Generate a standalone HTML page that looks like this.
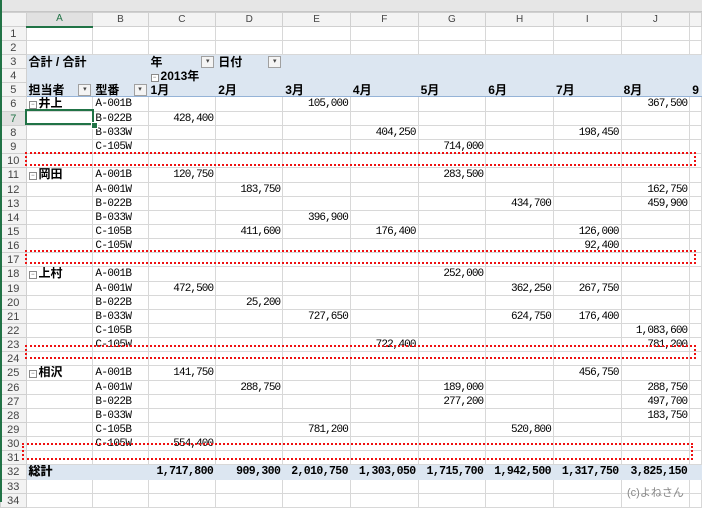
<!DOCTYPE html>
<html><head><meta charset="utf-8"><style>
body{margin:0;width:702px;height:502px;overflow:hidden;background:#fff;position:relative;font-family:"Liberation Mono","Noto Sans CJK JP",monospace;}
#top{position:absolute;left:0;top:0;width:702px;height:12px;background:#e6e6e6;border-bottom:1px solid #c6c6c6;box-sizing:border-box}
#gl{position:absolute;left:0;top:0;width:2px;height:502px;background:#217346;z-index:5}
table{position:absolute;left:0;top:12px;border-collapse:collapse;table-layout:fixed}
tr{height:14px}
td{height:14px;max-height:14px;padding:0 2px;border:1px solid #d8d8d8;font-size:11px;letter-spacing:-0.6px;white-space:nowrap;overflow:hidden;line-height:12px;box-sizing:border-box;position:relative;color:#000}
tr.h td{background:#f3f3f3;text-align:center;font-family:"Liberation Sans",sans-serif;font-size:10px;letter-spacing:0;color:#444;border-color:#d0d0d0}
td.rn{background:#f3f3f3;text-align:center;font-family:"Liberation Sans",sans-serif;font-size:11px;letter-spacing:0;color:#444;border-color:#d0d0d0}
td.n{text-align:right;letter-spacing:-0.9px}
tr.p td:not(.rn){background:#dce6f1;border-color:#dce6f1;font-weight:bold;font-family:"Liberation Sans","Noto Sans CJK JP",sans-serif;font-size:12px;letter-spacing:0}
tr.p5 td:not(.rn){border-bottom:1px solid #95b3d7}
tr.t td:not(.rn){background:#dce6f1;border-color:#dce6f1;font-weight:bold;font-size:11.5px;letter-spacing:-0.6px}
b.j{font-family:"Liberation Sans","Noto Sans CJK JP",sans-serif;font-size:12px;letter-spacing:0;line-height:12px}
.m{display:inline-block;width:6px;height:6px;border:1px solid #8a8a8a;font-size:6px;line-height:6px;text-align:center;color:#555;margin-right:2px;vertical-align:1px;font-weight:normal;background:#fff}
.dd{position:absolute;right:1px;top:1px;width:11px;height:10px;border:1px solid #a0a0a0;background:#f4f4f4;font-size:7px;line-height:10px;text-align:center;color:#444;font-weight:normal}
.red{position:absolute;left:25px;width:671px;height:14px;border:2px dotted #ee1111;box-sizing:border-box}
#sel{position:absolute;left:25px;top:109px;width:69px;height:16px;border:2px solid #217346;box-sizing:border-box}
#sq{position:absolute;left:91px;top:122px;width:5px;height:5px;background:#217346;border:1px solid #fff}
#wm{position:absolute;left:627px;top:484px;font-size:11px;color:#888;font-family:"Liberation Sans","Noto Sans CJK JP",sans-serif}
</style></head><body>
<div id="top"></div><div id="gl"></div>
<table>
<colgroup><col style="width:26px"><col style="width:67px"><col style="width:56px"><col style="width:68px"><col style="width:68px"><col style="width:68px"><col style="width:68px"><col style="width:68px"><col style="width:68px"><col style="width:68px"><col style="width:69px"><col style="width:8px"></colgroup>
<tr class="h"><td></td><td style="color:#217346;border-bottom:2px solid #217346;background:#e1e1e1">A</td><td>B</td><td>C</td><td>D</td><td>E</td><td>F</td><td>G</td><td>H</td><td>I</td><td>J</td><td></td></tr>
<tr><td class="rn">1</td><td></td><td></td><td></td><td></td><td></td><td></td><td></td><td></td><td></td><td></td><td></td></tr>
<tr><td class="rn">2</td><td></td><td></td><td></td><td></td><td></td><td></td><td></td><td></td><td></td><td></td><td></td></tr>
<tr class="p"><td class="rn">3</td><td>合計 / 合計</td><td></td><td>年<span class="dd">▾</span></td><td>日付<span class="dd">▾</span></td><td></td><td></td><td></td><td></td><td></td><td></td><td></td></tr>
<tr class="p"><td class="rn">4</td><td></td><td></td><td><span class="m">−</span>2013年</td><td></td><td></td><td></td><td></td><td></td><td></td><td></td><td></td></tr>
<tr class="p p5"><td class="rn">5</td><td>担当者<span class="dd">▾</span></td><td>型番<span class="dd">▾</span></td><td>1月</td><td>2月</td><td>3月</td><td>4月</td><td>5月</td><td>6月</td><td>7月</td><td>8月</td><td>9</td></tr>
<tr><td class="rn">6</td><td><span class="m">−</span><b class="j">井上</b></td><td>A-001B</td><td></td><td></td><td class="n">105,000</td><td></td><td></td><td></td><td></td><td class="n">367,500</td><td></td></tr>
<tr><td class="rn" style="color:#217346;background:#e1e1e1">7</td><td></td><td>B-022B</td><td class="n">428,400</td><td></td><td></td><td></td><td></td><td></td><td></td><td></td><td></td></tr>
<tr><td class="rn">8</td><td></td><td>B-033W</td><td></td><td></td><td></td><td class="n">404,250</td><td></td><td></td><td class="n">198,450</td><td></td><td></td></tr>
<tr><td class="rn">9</td><td></td><td>C-105W</td><td></td><td></td><td></td><td></td><td class="n">714,000</td><td></td><td></td><td></td><td></td></tr>
<tr><td class="rn">10</td><td></td><td></td><td></td><td></td><td></td><td></td><td></td><td></td><td></td><td></td><td></td></tr>
<tr><td class="rn">11</td><td><span class="m">−</span><b class="j">岡田</b></td><td>A-001B</td><td class="n">120,750</td><td></td><td></td><td></td><td class="n">283,500</td><td></td><td></td><td></td><td></td></tr>
<tr><td class="rn">12</td><td></td><td>A-001W</td><td></td><td class="n">183,750</td><td></td><td></td><td></td><td></td><td></td><td class="n">162,750</td><td></td></tr>
<tr><td class="rn">13</td><td></td><td>B-022B</td><td></td><td></td><td></td><td></td><td></td><td class="n">434,700</td><td></td><td class="n">459,900</td><td></td></tr>
<tr><td class="rn">14</td><td></td><td>B-033W</td><td></td><td></td><td class="n">396,900</td><td></td><td></td><td></td><td></td><td></td><td></td></tr>
<tr><td class="rn">15</td><td></td><td>C-105B</td><td></td><td class="n">411,600</td><td></td><td class="n">176,400</td><td></td><td></td><td class="n">126,000</td><td></td><td></td></tr>
<tr><td class="rn">16</td><td></td><td>C-105W</td><td></td><td></td><td></td><td></td><td></td><td></td><td class="n">92,400</td><td></td><td></td></tr>
<tr><td class="rn">17</td><td></td><td></td><td></td><td></td><td></td><td></td><td></td><td></td><td></td><td></td><td></td></tr>
<tr><td class="rn">18</td><td><span class="m">−</span><b class="j">上村</b></td><td>A-001B</td><td></td><td></td><td></td><td></td><td class="n">252,000</td><td></td><td></td><td></td><td></td></tr>
<tr><td class="rn">19</td><td></td><td>A-001W</td><td class="n">472,500</td><td></td><td></td><td></td><td></td><td class="n">362,250</td><td class="n">267,750</td><td></td><td></td></tr>
<tr><td class="rn">20</td><td></td><td>B-022B</td><td></td><td class="n">25,200</td><td></td><td></td><td></td><td></td><td></td><td></td><td></td></tr>
<tr><td class="rn">21</td><td></td><td>B-033W</td><td></td><td></td><td class="n">727,650</td><td></td><td></td><td class="n">624,750</td><td class="n">176,400</td><td></td><td></td></tr>
<tr><td class="rn">22</td><td></td><td>C-105B</td><td></td><td></td><td></td><td></td><td></td><td></td><td></td><td class="n">1,083,600</td><td></td></tr>
<tr><td class="rn">23</td><td></td><td>C-105W</td><td></td><td></td><td></td><td class="n">722,400</td><td></td><td></td><td></td><td class="n">781,200</td><td></td></tr>
<tr><td class="rn">24</td><td></td><td></td><td></td><td></td><td></td><td></td><td></td><td></td><td></td><td></td><td></td></tr>
<tr><td class="rn">25</td><td><span class="m">−</span><b class="j">相沢</b></td><td>A-001B</td><td class="n">141,750</td><td></td><td></td><td></td><td></td><td></td><td class="n">456,750</td><td></td><td></td></tr>
<tr><td class="rn">26</td><td></td><td>A-001W</td><td></td><td class="n">288,750</td><td></td><td></td><td class="n">189,000</td><td></td><td></td><td class="n">288,750</td><td></td></tr>
<tr><td class="rn">27</td><td></td><td>B-022B</td><td></td><td></td><td></td><td></td><td class="n">277,200</td><td></td><td></td><td class="n">497,700</td><td></td></tr>
<tr><td class="rn">28</td><td></td><td>B-033W</td><td></td><td></td><td></td><td></td><td></td><td></td><td></td><td class="n">183,750</td><td></td></tr>
<tr><td class="rn">29</td><td></td><td>C-105B</td><td></td><td></td><td class="n">781,200</td><td></td><td></td><td class="n">520,800</td><td></td><td></td><td></td></tr>
<tr><td class="rn">30</td><td></td><td>C-105W</td><td class="n">554,400</td><td></td><td></td><td></td><td></td><td></td><td></td><td></td><td></td></tr>
<tr><td class="rn">31</td><td></td><td></td><td></td><td></td><td></td><td></td><td></td><td></td><td></td><td></td><td></td></tr>
<tr class="t"><td class="rn">32</td><td><b class="j">総計</b></td><td></td><td class="n">1,717,800</td><td class="n">909,300</td><td class="n">2,010,750</td><td class="n">1,303,050</td><td class="n">1,715,700</td><td class="n">1,942,500</td><td class="n">1,317,750</td><td class="n">3,825,150</td><td></td></tr>
<tr><td class="rn">33</td><td></td><td></td><td></td><td></td><td></td><td></td><td></td><td></td><td></td><td></td><td></td></tr>
<tr><td class="rn">34</td><td></td><td></td><td></td><td></td><td></td><td></td><td></td><td></td><td></td><td></td><td></td></tr>
</table>
<div class="red" style="top:152px"></div>
<div class="red" style="top:250px"></div>
<div class="red" style="top:345px"></div>
<div class="red" style="top:443px;height:17px;left:22px"></div>
<div id="sel"></div><div id="sq"></div>
<div id="wm">(c)よねさん</div>
</body></html>
